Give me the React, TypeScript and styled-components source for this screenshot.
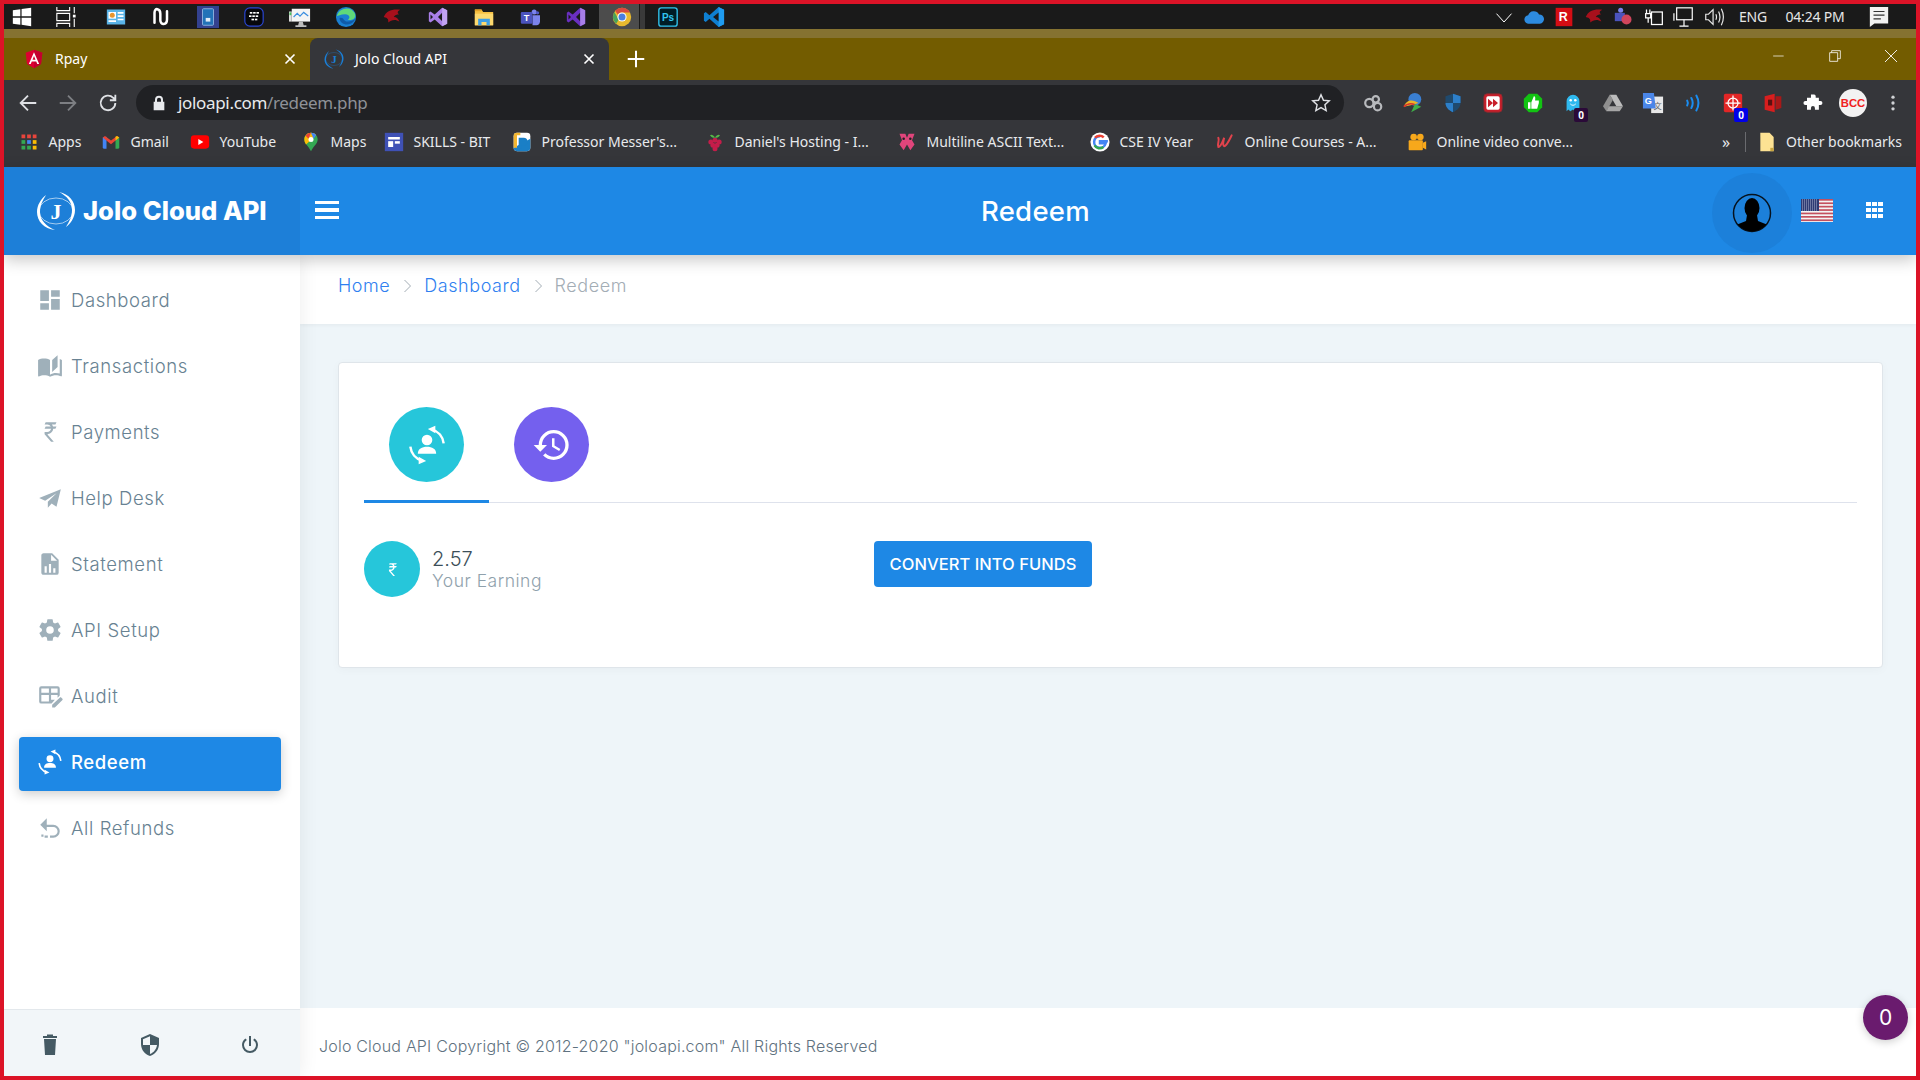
import React from "react";
import styled, { createGlobalStyle } from "styled-components";

const Global = createGlobalStyle`
  html, body { margin: 0; padding: 0; width: 1920px; height: 1080px; overflow: hidden; background: #fff; }
  * { box-sizing: border-box; }
`;

const UI = `"Noto Sans", "Open Sans", sans-serif`;
const PAGE = `Inter, "Open Sans", sans-serif`;

const Frame = styled.div`
  position: relative; width: 1920px; height: 1080px; border: 4px solid #dc1327;
  display: flex; flex-direction: column; overflow: hidden; background: #eef5f9;
`;

/* ---------- Windows taskbar ---------- */
const Taskbar = styled.div`
  height: 25px; background: #1a1a1a; display: flex; align-items: center; color: #fff; flex: none;
`;
const TaskSlot = styled.div<{ $w?: number; $active?: boolean }>`
  width: ${p => p.$w ?? 46}px; height: 25px; flex: none; display: flex; align-items: center; justify-content: center;
  background: ${p => (p.$active ? "linear-gradient(90deg,#4c4c4c 0 40px,#1a1a1a 40px 41px,#3a3a3a 41px)" : "transparent")};
`;
const Tray = styled.div`
  margin-left: auto; display: flex; align-items: center; height: 25px;
`;
const TrayText = styled.span<{ $w: number }>`
  width: ${p => p.$w}px; text-align: center; font: 400 14px ${UI}; color: #e6e6e6; letter-spacing: -0.2px; flex: none;
`;
const OliveBand = styled.div`height: 9px; background: #857231; flex: none;`;

/* ---------- Chrome tab strip ---------- */
const TabStrip = styled.div`
  height: 42px; background: #735c00; display: flex; align-items: stretch; flex: none; color: #fff;
`;
const BrowserTab = styled.div<{ $active?: boolean }>`
  width: ${p => (p.$active ? 299 : 306)}px; display: flex; align-items: center; flex: none;
  padding-left: ${p => (p.$active ? 14 : 20)}px; padding-right: 11px; padding-bottom: 1px;
  background: ${p => (p.$active ? "#35363a" : "transparent")};
  border-radius: 8px 8px 0 0; font: 400 14px ${UI}; gap: 11px;
`;
const TabTitle = styled.span`flex: 1; white-space: nowrap;`;
const NewTab = styled.div`width: 54px; display: flex; align-items: center; justify-content: center; flex: none;`;
const WindowButtons = styled.div`margin-left: auto; display: flex; align-items: flex-start; padding-top: 2px; margin-right: -3px;`;
const WinBtn = styled.div`width: 56px; height: 32px; display: flex; align-items: center; justify-content: center;`;

/* ---------- Toolbar ---------- */
const Toolbar = styled.div`
  height: 45px; background: #35363a; display: flex; align-items: center; padding-left: 4px; flex: none; color: #fff;
`;
const NavBtn = styled.div`width: 40px; height: 35px; display: flex; align-items: center; justify-content: center; flex: none;`;
const Omnibox = styled.div`
  margin-left: 8px; width: 1208px; height: 35px; background: #202124; border-radius: 18px; display: flex; align-items: center;
  padding: 0 12px 0 15px; flex: none;
`;
const Url = styled.div`flex: 1; margin-left: 11px; font: 400 17px ${UI}; color: #e8eaed; letter-spacing: -0.33px;`;
const UrlDim = styled.span`color: #8e9197;`;
const Extensions = styled.div`display: flex; margin-left: 9px; align-items: center;`;
const Ext = styled.div`
  position: relative; width: 40px; height: 30px; display: flex; align-items: center; justify-content: center; flex: none;
`;
const ExtCount = styled.span<{ $bg: string }>`
  position: absolute; right: 5px; bottom: -4px; width: 14px; height: 14px; background: ${p => p.$bg}; color: #fff;
  font: 700 10px ${UI}; display: flex; align-items: center; justify-content: center; border-radius: 2px;
`;

/* ---------- Bookmarks ---------- */
const BookmarkBar = styled.div`
  height: 42px; background: #35363a; display: flex; align-items: center; padding: 0 0 9px 15px; flex: none; color: #fff;
`;
const Bookmark = styled.div<{ $w: number }>`
  width: ${p => p.$w}px; display: flex; align-items: center; gap: 9.5px; flex: none;
  font: 400 14px ${UI}; white-space: nowrap; letter-spacing: 0; color: #e8eaed;
`;
const BookmarkEnd = styled.div`
  margin-left: auto; display: flex; align-items: center; gap: 9px; padding-right: 14px; font: 400 14px ${UI}; letter-spacing: 0; color: #e8eaed;
`;
const Chevrons = styled.span`font-size: 16px; margin-right: 6px;`;
const Divider = styled.span`width: 1px; height: 20px; background: #6a6b6f; margin-right: 2px;`;
const IconBox = styled.span`width: 20px; height: 20px; display: flex; align-items: center; justify-content: center; flex: none;`;

/* ---------- App header ---------- */
const Header = styled.header`
  height: 88px; background: #1e88e5; display: flex; align-items: center; flex: none; position: relative; z-index: 3;
  box-shadow: 0 5px 15px rgba(0,0,0,.22); color: #fff;
`;
const Brand = styled.div`
  width: 296px; height: 88px; background: #1d7fd8; display: flex; align-items: center; padding: 0 0 1px 32px; gap: 7px; flex: none;
`;
const BrandName = styled.span`font: 800 25.6px ${PAGE}; letter-spacing: 0; white-space: nowrap;`;
const Burger = styled.div`margin: 0 0 2px 15px; width: 24px; display: flex; flex-direction: column; gap: 4.5px;`;
const BurgerBar = styled.span`height: 3.2px; background: #fff; display: block;`;
const HeaderTitle = styled.div`
  flex: 1; text-align: center; font: 500 27.5px ${PAGE}; letter-spacing: 0.3px; padding-left: 20px;
`;
const UserHalo = styled.div`
  width: 80px; height: 80px; border-radius: 50%; background: #1c80da; display: flex; align-items: center; justify-content: center; flex: none; margin-top: 4px;
`;
const Flag = styled.div`margin: 0 0 2px 9px; display: flex; flex: none;`;
const AppsGrid = styled.div`
  margin: 0 33px 2px 33px; width: 17px; height: 16px; display: grid; grid-template-columns: repeat(3, 5px);
  grid-auto-rows: 4px; gap: 2px 1px; flex: none;
`;
const AppsDot = styled.span`background: #fff;`;

/* ---------- Layout ---------- */
const Body = styled.div`flex: 1; display: flex; min-height: 0;`;
const Sidebar = styled.aside`
  width: 296px; flex: none; background: #fff; display: flex; flex-direction: column; position: relative; z-index: 2;
  box-shadow: 1px 0 18px rgba(0,0,0,.07);
`;
const Nav = styled.nav`flex: 1; padding-top: 20px;`;
const NavItem = styled.div<{ $active?: boolean }>`
  height: 54px; margin: 0 19px 12px 15px; padding: 0 0 5px 18px; display: flex; align-items: center; gap: 8px; border-radius: 4px;
  font: ${p => (p.$active ? 500 : 300)} 18.5px ${PAGE}; letter-spacing: 0.6px;
  color: ${p => (p.$active ? "#fff" : "#688292")};
  background: ${p => (p.$active ? "#1e88e5" : "transparent")};
  box-shadow: ${p => (p.$active ? "0 3px 12px rgba(0,0,0,.2)" : "none")};
`;
const NavIcon = styled.svg<{ $active?: boolean }>`
  width: 26px; height: 26px; flex: none; fill: ${p => (p.$active ? "#fff" : "#9fb0ba")};
`;
const SideFooter = styled.div`
  height: 67px; background: #f2f6f9; border-top: 1px solid #e3e8ec; display: grid; grid-template-columns: repeat(3, 100px);
  align-items: center; justify-items: center; padding: 4px 0 0 0; flex: none;
`;
const FootIcon = styled.svg`width: 24px; height: 24px; fill: #455a64; margin-left: -8px;`;

const Main = styled.main`flex: 1; display: flex; flex-direction: column; min-width: 0;`;
const Breadcrumb = styled.div`
  height: 69px; background: #fff; display: flex; align-items: center; padding: 0 0 8px 38px; flex: none; gap: 12px;
  font: 300 18px ${PAGE}; letter-spacing: 0.55px; box-shadow: 0 1px 4px rgba(0,0,0,.05);
`;
const Crumb = styled.span<{ $current?: boolean }>`color: ${p => (p.$current ? "#a3adb5" : "#2f7ff0")};`;
const CrumbSep = styled.svg`width: 9px; height: 14px; fill: none; stroke: #a3adb5; stroke-width: 1; margin: 0 0 0 1px;`;
const Content = styled.div`flex: 1; padding: 38px 33px 0 38px;`;
const Card = styled.section`
  height: 306px; background: #fff; border: 1px solid #dfe5ea; border-radius: 4px; padding: 44px 25px 0 25px;
  box-shadow: 0 2px 10px rgba(0,0,0,.03);
`;
const Tabs = styled.div`display: flex; border-bottom: 1px solid #dee2ec; height: 96px;`;
const Tab = styled.div<{ $active?: boolean }>`
  width: 125px; height: 96px; display: flex; justify-content: center;
  border-bottom: 3px solid ${p => (p.$active ? "#1e88e5" : "transparent")};
`;
const TabCircle = styled.div<{ $bg: string }>`
  width: 75px; height: 75px; border-radius: 50%; background: ${p => p.$bg}; display: flex; align-items: center; justify-content: center;
`;
const TabGlyph = styled.svg`width: 40px; height: 40px; fill: #fff;`;
const Stats = styled.div`display: flex; margin-top: 38px;`;
const Stat = styled.div`width: 510px; display: flex; align-items: flex-start; gap: 12px; flex: none;`;
const StatCircle = styled.div`
  width: 56px; height: 56px; border-radius: 50%; background: #26c6da; display: flex; align-items: center; justify-content: center; flex: none;
`;
const StatGlyph = styled.svg`width: 17px; height: 17px; fill: #fff;`;
const StatText = styled.div`display: flex; flex-direction: column; padding-top: 6px;`;
const StatValue = styled.span`font: 300 20px/24px ${PAGE}; color: #3c4f59;`;
const StatLabel = styled.span`font: 300 17.5px/19px ${PAGE}; color: #8fa1ac; letter-spacing: 0.5px;`;
const ConvertButton = styled.button`
  width: 218px; height: 46px; border: 0; border-radius: 4px; background: #1e88e5; color: #fff; padding: 0; cursor: pointer;
  font: 500 16.5px ${PAGE}; letter-spacing: 0.05px;
`;
const Footer = styled.footer`
  height: 68px; background: #fff; display: flex; align-items: center; padding: 7px 0 0 19px; flex: none;
  font: 300 16px ${PAGE}; color: #5f7280; letter-spacing: 0.2px;
`;
const Counter = styled.div`
  position: absolute; right: 8px; bottom: 36px; width: 45px; height: 45px; border-radius: 50%; background: #6a1b6e; z-index: 5;
  color: #fff; font: 400 21px ${PAGE}; display: flex; align-items: center; justify-content: center;
  box-shadow: 0 2px 8px rgba(0,0,0,.2);
`;

/* ---------- drawings ---------- */
const S = ({ s = 20, v = 24, children }: { s?: number; v?: number; children: React.ReactNode }) => (
  <svg width={s} height={s} viewBox={`0 0 ${v} ${v}`}>{children}</svg>
);

const taskIcons: React.ReactNode[] = [
  <S s={20}><path fill="#fff" d="M1 4l9-1.3V11H1zM11.5 2.5L23 1v10H11.5zM1 13h9v8.3L1 20zM11.5 13H23v10l-11.5-1.6z"/></S>,
  <S s={22}><g fill="none" stroke="#fff" strokeWidth="1.2"><path d="M2 1v4h14V1M2 8h14v8H2zM2 23v-4h14v4M21 1v7M21 14v9"/></g><rect x="19.5" y="9.5" width="3" height="3" fill="#fff"/></S>,
  <S s={20}><rect x="1" y="3" width="22" height="18" fill="#5ab4e8"/><rect x="3" y="6" width="9" height="8" fill="#fff"/><circle cx="7.5" cy="10" r="3" fill="#e8962e"/><path d="M14 6h7v2h-7zM14 10h7v2h-7zM14 14h7v2h-7zM3 16h9v2H3z" fill="#fff"/></S>,
  <S s={20}><path d="M3 19V7c0-7 7-5 7 1v8c0 6 8 6 8-1V5" fill="none" stroke="#fff" strokeWidth="3" strokeLinecap="round"/></S>,
  <S s={22}><rect width="24" height="24" fill="#33418f"/><rect x="6" y="3" width="12" height="18" rx="1" fill="#2272b8" stroke="#8fb4e0"/><rect x="9.500" y="13" width="5" height="4" fill="#dfe9f5"/></S>,
  <S s={20}><rect x="1" y="1" width="22" height="22" rx="6" fill="#07080c" stroke="#2a47d6" strokeWidth="1.4"/><g fill="#fff"><rect x="7" y="6" width="3" height="2"/><rect x="11" y="6" width="3" height="2"/><rect x="15" y="6" width="3" height="2"/><rect x="6" y="10" width="3" height="2"/><rect x="10" y="10" width="3" height="2"/><rect x="14" y="10" width="3" height="2"/><rect x="9" y="14" width="3" height="2"/><rect x="13" y="14" width="3" height="2"/></g></S>,
  <S s={22}><rect x="3" y="3" width="20" height="14" fill="#f4f4f4"/><path d="M5 12l4-4 3 3 4-4 5 4" fill="none" stroke="#3a8ee0" strokeWidth="1.3"/><rect y="6" width="3" height="11" fill="#dedede"/><rect y=" 7" x="0.5" width="2" height="3" fill="#46c25a"/><path d="M11 17h4l1 4h3v2H7v-2h3z" fill="#bdbdbd"/></S>,
  <S s={22}><circle cx="12" cy="12" r="11" fill="#1a7fd2"/><path d="M2 11C4 2 18-1 22 9c1 5-4 7-8 6 3-2 2-6-3-6-5 0-8 2-9 2z" fill="#5fd97a"/><path d="M5 13c0 5 5 8 10 7 4-1 6-3 7-6-3 3-9 4-11 2-2-1-2-4-6-3z" fill="#0f5aa8"/></S>,
  <S s={22}><path d="M3 12c3-7 9-9 18-8-4 2-3 4-1 5-3 0-5 1-6 3 3 0 5 2 6 5-4-3-9-2-12 1 0-3 0-5-5-6z" fill="#a8101c"/></S>,
  <S s={20}><path d="M17 1l6 3v16l-6 3-9-8-5 3.5L1 17V7l2-1.5L8 9zM17 7l-5 5 5 5z" fill="#a97fe8" fillRule="evenodd"/><path d="M17 1l6 3v16l-6 3z" fill="#c2a3f3"/><path d="M3 9v6l3-3z" fill="#1a1a1a"/></S>,
  <S s={20}><path d="M1 3h8l2 3h12v16H1z" fill="#f6c143"/><rect x="1" y="8" width="22" height="14" fill="#fcd96f"/><path d="M5 22v-8h14v8h-4v-4H9v4z" fill="#3d9ee6"/><rect x="1" y="3" width="8" height="2" fill="#e2a126"/></S>,
  <S s={20}><circle cx="17" cy="6" r="3" fill="#7b83eb"/><circle cx="21" cy="7" r="2" fill="#5059c9"/><path d="M15 10h9v7c0 3-2 5-4 5h-5z" fill="#7b83eb"/><rect x="1" y="6" width="14" height="14" rx="1.5" fill="#4b53bc"/><text x="8" y="17" textAnchor="middle" fontSize="11" fontWeight="700" fill="#fff" fontFamily="Liberation Sans">T</text></S>,
  <S s={20}><path d="M17 1l6 3v16l-6 3-9-8-5 3.5L1 17V7l2-1.5L8 9zM17 7l-5 5 5 5z" fill="#6a2fc0" fillRule="evenodd"/><path d="M17 1l6 3v16l-6 3z" fill="#a77ee8"/><path d="M3 9v6l3-3z" fill="#1a1a1a"/></S>,
  <S s={20}><circle cx="12" cy="12" r="11" fill="#e8b92f"/><path d="M12 1a11 11 0 0 1 9.6 5.5H12A5.5 5.5 0 0 0 7 9L3.7 4.5A11 11 0 0 1 12 1z" fill="#d84a3f"/><path d="M2.8 6 8 15l-3 5A11 11 0 0 1 2.8 6z" fill="#4aa35a"/><circle cx="12" cy="12" r="5.5" fill="#fff"/><circle cx="12" cy="12" r="4.2" fill="#4a7fe0"/></S>,
  <S s={20}><rect x="1" y="1" width="22" height="22" rx="3" fill="#001d26" stroke="#31c5f0" strokeWidth="1.6"/><text x="12" y="17" textAnchor="middle" fontSize="12" fontWeight="700" fill="#31c5f0" fontFamily="Liberation Sans">Ps</text></S>,
  <S s={22}><path d="M17 1l6 3v16l-6 3-10-9-4 3.5L1 16V8l2-1.5L7 10z" fill="#0e7fd1"/><path d="M17 1l6 3v16l-6 3z" fill="#1f9cf0"/><path d="M17 7l-6 5 6 5z" fill="#1a1a1a"/></S>,
];

const extIcons: React.ReactNode[] = [
  <S s={22}><g fill="none" stroke="#b8babd" strokeWidth="2.4"><circle cx="8" cy="12" r="4.5"/><circle cx="15" cy="8" r="3.5"/><circle cx="17" cy="16" r="4"/></g></S>,
  <S s={22}><circle cx="14" cy="8" r="7" fill="#3a7fd2"/><path d="M2 16C5 8 12 8 18 12l-6 2z" fill="#e8b52a"/><path d="M2 16c3-3 8-4 12-2" stroke="#d8342c" strokeWidth="2" fill="none"/><path d="M10 22l11-6-7-3z" fill="#3fae49"/></S>,
  <S s={20}><path d="M12 1l9 3v8c0 5-4 9-9 11-5-2-9-6-9-11V4z" fill="#1f4a6e"/><path d="M12 1v11h9V4zM3 12h9v11c-5-2-9-6-9-11z" fill="#2d7fc9"/></S>,
  <S s={20}><rect x="1" y="1" width="22" height="22" rx="4" fill="#c81e2a" stroke="#8c2c30"/><rect x="4" y="4" width="16" height="16" rx="2" fill="#fff"/><path d="M6 7l6 5-6 5zM12 7l6 5-6 5z" fill="#c81e2a"/></S>,
  <S s={20}><path d="M7 1h10l6 6v10l-6 6H7l-6-6V7z" fill="#12c412"/><path d="M6 11h3v8H6zM10 11l3-7c2 0 2 2 1.5 5H19v3l-2 7h-7z" fill="#fff"/></S>,
  <S s={22}><path d="M5 21V10a7 7 0 0 1 14 0v11l-3-2-2 2-2-2-3 2-2-2z" fill="#2fb9ef"/><circle cx="9.5" cy="9" r="1.4" fill="#fff"/><circle cx="14.5" cy="9" r="1.4" fill="#fff"/><path d="M9 13c2 2 4 2 6 0" stroke="#fff" fill="none"/></S>,
  <S s={20}><path d="M8 2h8l8 14h-8z" fill="#bcbcbc"/><path d="M8 2L0 16l4 6 8-14z" fill="#8f8f8f"/><path d="M7 16h17l-4 6H4z" fill="#a6a6a6"/></S>,
  <S s={22}><rect x="10" y="5" width="13" height="18" fill="#e8e8e8"/><text x="17" y="18" textAnchor="middle" fontSize="9" fill="#666" fontFamily="Noto Sans CJK SC">文</text><path d="M1 1h12l2 17H1z" fill="#4a86e8"/><text x="7" y="13" textAnchor="middle" fontSize="10" fontWeight="700" fill="#fff" fontFamily="Liberation Sans">G</text></S>,
  <S s={20}><g fill="none" stroke="#1a8df0" strokeWidth="2.4" strokeLinecap="round"><path d="M5 9c1.2 2 1.2 4 0 6"/><path d="M10 6c2.2 4 2.2 8 0 12"/><path d="M16 3c3.4 6 3.4 12 0 18"/></g></S>,
  <S s={20}><rect x="1" y="1" width="22" height="22" rx="2" fill="#e22626"/><g fill="none" stroke="#fff" strokeWidth="1.5"><circle cx="12" cy="12" r="6"/><path d="M12 3v18M3 12h18"/></g></S>,
  <S s={20}><path d="M2 4l12-3v22L2 20z" fill="#d81e1e"/><path d="M15 4h7v14l-7 2z" fill="#a81818"/><rect x="6" y="8" width="5" height="7" fill="#5a1010"/></S>,
  <S s={20}><path d="M9 2h4a2 2 0 0 1 2 2v2h4v4h2a2.5 2.5 0 0 1 0 5h-2v6h-5v-2a2.5 2.5 0 0 0-5 0v2H4v-6H2a2.5 2.5 0 0 1 0-5h2V6h5z" fill="#fff" transform="translate(1 0) scale(.95)"/></S>,
  <S s={28} v={26}><circle cx="13" cy="13" r="13" fill="#f2f2f2"/><text x="13" y="17" textAnchor="middle" fontSize="10.5" fontWeight="700" fill="#f02020" fontFamily="Liberation Sans">BCC</text></S>,
  <S s={20}><g fill="#d0d2d5"><circle cx="12" cy="5" r="2"/><circle cx="12" cy="12" r="2"/><circle cx="12" cy="19" r="2"/></g></S>,
];
const extCounts: Record<number, string> = { 5: "#2a0a38", 9: "#0000e8" };

const bookmarks: { label: string; w: number; icon: React.ReactNode }[] = [
  { label: "Apps", w: 82, icon: <S s={18}><g>{[0,1,2].flatMap(r => [0,1,2].map(c => <rect key={`${r}${c}`} x={2+c*7.5} y={2+r*7.5} width="5" height="5" fill={["#e8453c","#e8453c","#e8453c","#34a853","#4285f4","#fbbc05","#34a853","#34a853","#fbbc05"][r*3+c]} />))}</g></S> },
  { label: "Gmail", w: 89, icon: <S s={18}><path d="M1 6l5-1v16H3a2 2 0 0 1-2-2z" fill="#4285f4"/><path d="M18 5l5 1v13a2 2 0 0 1-2 2h-3z" fill="#34a853"/><path d="M1 6l3-2 8 6 8-6 3 2-11 9z" fill="#ea4335"/><path d="M18 5l2-1 3 2-5 4z" fill="#fbbc05"/></S> },
  { label: "YouTube", w: 111, icon: <S s={20}><rect x="1" y="4" width="22" height="16" rx="4" fill="#f00"/><path d="M10 8.5l6 3.5-6 3.5z" fill="#fff"/></S> },
  { label: "Maps", w: 83, icon: <S s={20}><path d="M12 1c4.5 0 8 3.5 8 8 0 5-5 8-8 14-3-6-8-9-8-14 0-4.500 3.500-8 8-8z" fill="#34a853"/><path d="M12 1c2.500 0 4.700 1 6.200 2.800L6 15c-1-1.800-2-3.600-2-6 0-4.500 3.500-8 8-8z" fill="#fbbc05"/><path d="M12 1C9.500 1 7 2.200 5.500 4.500L9 8z" fill="#ea4335"/><path d="M12 1c2.500 0 4.700 1 6.200 2.800L15 8z" fill="#4285f4"/><circle cx="12" cy="9" r="3" fill="#fff"/></S> },
  { label: "SKILLS - BIT", w: 128, icon: <S s={20}><rect x="1" y="1" width="22" height="22" fill="#3f51b5"/><rect x="5" y="6" width="14" height="3" fill="#fff"/><rect x="5" y="11" width="6" height="7" fill="#fff"/><rect x="13" y="11" width="6" height="3" fill="#fff"/></S> },
  { label: "Professor Messer's...", w: 193, icon: <S s={20}><rect x="2" y="1" width="20" height="22" rx="4" fill="#fff"/><path d="M2 19L22 8v11a4 4 0 0 1-4 4H6a4 4 0 0 1-4-4z" fill="#1a7fc6"/><path d="M2 5a4 4 0 0 1 4-4h4v3H6v15H2z" fill="#f2b632"/><path d="M8 7h6a4.500 4.500 0 0 1 0 9h-3v4H8z" fill="#1a7fc6"/></S> },
  { label: "Daniel's Hosting - I...", w: 192, icon: <S s={20}><g fill="#c51d4a"><circle cx="12" cy="10" r="3"/><circle cx="7" cy="12" r="3"/><circle cx="17" cy="12" r="3"/><circle cx="9.500" cy="16" r="3"/><circle cx="14.500" cy="16" r="3"/><circle cx="12" cy="20" r="3"/></g><path d="M12 7C10 3 7 3 6 4c2 3 4 3 6 3 2 0 4 0 6-3-1-1-4-1-6 3z" fill="#55b948"/></S> },
  { label: "Multiline ASCII Text...", w: 193, icon: <S s={20}><path d="M3 2h7l2 5 2-5h7l-3 8 3 5-5 7-4-7-4 7-5-7 3-5z" fill="#e0457b"/><circle cx="8" cy="8" r="1.500" fill="#222"/><circle cx="16" cy="8" r="1.500" fill="#222"/></S> },
  { label: "CSE IV Year", w: 125, icon: <S s={20}><circle cx="12" cy="12" r="11.500" fill="#fff"/><path d="M12 5a7 7 0 1 0 6.800 8.500H12v-2.500h9.500" fill="none" stroke="#4285f4" strokeWidth="3"/><path d="M6 7a7 7 0 0 1 10.500-.5" fill="none" stroke="#ea4335" strokeWidth="3"/><path d="M5.500 16a7 7 0 0 0 10.500 2" fill="none" stroke="#34a853" strokeWidth="3"/></S> },
  { label: "Online Courses - A...", w: 192, icon: <S s={20}><path d="M4 7c2 3-2 8 0 11 3 0 5-6 7-11-1 4-2 9 0 10 3 0 6-7 9-13" fill="none" stroke="#e0434c" strokeWidth="2.400" strokeLinecap="round"/></S> },
  { label: "Online video conve...", w: 0, icon: <S s={20}><circle cx="8" cy="6" r="4" fill="#f7a81b"/><circle cx="16" cy="6" r="4" fill="#f7a81b"/><rect x="2" y="10" width="17" height="12" rx="1" fill="#f7a81b"/><path d="M19 13l4-2v10l-4-2z" fill="#f7a81b"/></S> },
];

const NavSvg = ({ d, active, children }: { d?: string; active?: boolean; children?: React.ReactNode }) => (
  <NavIcon viewBox="0 0 24 24" $active={active}>{d && <path d={d} />}{children}</NavIcon>
);

const ConvertGlyph = ({ stroke = "#fff" }: { stroke?: string }) => (
  <>
    <circle cx="12" cy="9" r="3.2" fill={stroke} />
    <path d="M6.500 17.200c0-3 2.500-4.200 5.500-4.200s5.500 1.200 5.500 4.200z" fill={stroke} />
    <path d="M15 2.600A10 10 0 0 1 22 11M9 21.400A10 10 0 0 1 2 13" fill="none" stroke={stroke} strokeWidth="1.500" />
    <path d="M12.500 2.400l4.500-2v4.500zM11.500 21.600l-4.500 2v-4.500z" fill={stroke} />
  </>
);

const paths = {
  dashboard: "M13,3V9H21V3M13,21H21V11H13M3,21H11V15H3M3,13H11V3H3V13Z",
  book: "M19 2L14 6.5V17.5L19 13V2M6.5 5C4.55 5 2.45 5.4 1 6.5V21.16C1 21.41 1.25 21.66 1.5 21.66C1.6 21.66 1.65 21.59 1.75 21.59C3.1 20.94 5.05 20.5 6.5 20.5C8.45 20.5 10.55 20.9 12 22C13.35 21.15 15.8 20.5 17.5 20.5C19.15 20.5 20.85 20.81 22.25 21.56C22.35 21.61 22.4 21.59 22.5 21.59C22.75 21.59 23 21.34 23 21.09V6.5C22.4 6.05 21.75 5.75 21 5.5V19C19.9 18.65 18.7 18.5 17.5 18.5C15.8 18.5 13.35 19.15 12 20V6.5C10.55 5.4 8.45 5 6.5 5Z",
  inr: "M8,3H18L17,5H13.74C14.22,5.58 14.58,6.26 14.79,7H18L17,9H15C14.75,11.57 12.74,13.63 10.2,13.96V14H9.5L15.5,21H13L7,14V12H9.5V12C11.26,12 12.72,10.7 12.96,9H7L8,7H12.66C12.1,5.82 10.9,5 9.5,5H7L8,3Z",
  send: "M22 4L2 12l5.500 2.500L18 7.500 10 15.500V21l3.500-4 4.500 3z",
  file: "M13,9H18.5L13,3.5V9M6,2H14L20,8V20A2,2 0 0,1 18,22H6C4.89,22 4,21.1 4,20V4C4,2.89 4.89,2 6,2M7,20H9V14H7V20M11,20H13V12H11V20M15,20H17V16H15V20Z",
  gear: "M12,15.5A3.5,3.5 0 0,1 8.5,12A3.5,3.5 0 0,1 12,8.5A3.5,3.5 0 0,1 15.5,12A3.5,3.5 0 0,1 12,15.5M19.43,12.97C19.47,12.65 19.5,12.33 19.5,12C19.5,11.67 19.47,11.34 19.43,11L21.54,9.37C21.73,9.22 21.78,8.95 21.66,8.73L19.66,5.27C19.54,5.05 19.27,4.96 19.05,5.05L16.56,6.05C16.04,5.66 15.5,5.32 14.87,5.07L14.5,2.42C14.46,2.18 14.25,2 14,2H10C9.75,2 9.54,2.18 9.5,2.42L9.13,5.07C8.5,5.32 7.96,5.66 7.44,6.05L4.95,5.05C4.73,4.96 4.46,5.05 4.34,5.27L2.34,8.73C2.21,8.95 2.27,9.22 2.46,9.37L4.57,11C4.53,11.34 4.5,11.67 4.5,12C4.5,12.33 4.53,12.65 4.57,12.97L2.46,14.63C2.27,14.78 2.21,15.05 2.34,15.27L4.34,18.73C4.46,18.95 4.73,19.03 4.95,18.95L7.44,17.94C7.96,18.34 8.5,18.68 9.13,18.93L9.5,21.58C9.54,21.82 9.75,22 10,22H14C14.25,22 14.46,21.82 14.5,21.58L14.87,18.93C15.5,18.67 16.04,18.34 16.56,17.94L19.05,18.95C19.27,19.03 19.54,18.95 19.66,18.73L21.66,15.27C21.78,15.05 21.73,14.78 21.54,14.63L19.43,12.97Z",
  table: "M4 3h15a2 2 0 0 1 2 2v6.500l-2 2V11h-6v4.500h3.500l-3 3.500H4a2 2 0 0 1-2-2V5a2 2 0 0 1 2-2zM4 5v4h7V5zM13 5v4h6V5zM4 11v6h7v-6zM22.500 13.500l1 1c.3.3.3.8 0 1.100l-7 7H14v-2.500l7-6.600c.4-.4 1.100-.4 1.500 0z",
  refund: "M9 3L3 9l6 6v-4h6a4 4 0 0 1 0 8h-3v2h3a6 6 0 0 0 0-12H9zM7 19h3v2H7zM4 18h2v2H4z",
  history: "M13.5,8H12V13L16.28,15.54L17,14.33L13.5,12.25V8M13,3A9,9 0 0,0 4,12H1L4.96,16.03L9,12H6A7,7 0 0,1 13,5A7,7 0 0,1 20,12A7,7 0 0,1 13,19C11.07,19 9.32,18.21 8.06,16.94L6.64,18.36C8.27,20 10.5,21 13,21A9,9 0 0,0 22,12A9,9 0 0,0 13,3",
  trash: "M6 6h12l-1 16H7zM5 3h14v2H5zM9 1.500h6V3H9z",
  shield: "M12,12H19C18.47,16.11 15.72,19.78 12,20.92V12H5V6.3L12,3.19M12,1L3,5V11C3,16.55 6.84,21.73 12,23C17.16,21.73 21,16.55 21,11V5L12,1Z",
  power: "M16.56,5.44L15.11,6.89C16.84,7.94 18,9.83 18,12A6,6 0 0,1 12,18A6,6 0 0,1 6,12C6,9.83 7.16,7.94 8.88,6.88L7.44,5.44C5.36,6.88 4,9.28 4,12A8,8 0 0,0 12,20A8,8 0 0,0 20,12C20,9.28 18.64,6.88 16.56,5.44M13,3H11V13H13",
};

const navItems = [
  { label: "Dashboard", d: paths.dashboard },
  { label: "Transactions", d: paths.book },
  { label: "Payments", d: paths.inr },
  { label: "Help Desk", d: paths.send },
  { label: "Statement", d: paths.file },
  { label: "API Setup", d: paths.gear },
  { label: "Audit", d: paths.table },
  { label: "Redeem", active: true },
  { label: "All Refunds", d: paths.refund },
];

const Chevron = () => <CrumbSep viewBox="0 0 9 14"><path d="M1.500 1l6 6-6 6" /></CrumbSep>;

const UsFlag = () => (
  <svg width="32" height="23" viewBox="0 0 32 23">
    <rect width="32" height="23" fill="#f4f4f4" />
    {[0, 1, 2, 3, 4, 5, 6].map(i => <rect key={i} y={i * 3.4} width="32" height="1.7" fill="#c4505f" />)}
    <rect width="18" height="12" fill="#2e3a73" />
    {[1, 3, 5, 7, 9, 11].map(y => <path key={y} d={`M1 ${y}h16`} stroke="#cfd3e6" strokeWidth=".8" strokeDasharray="1 1" />)}
  </svg>
);

const JoloMark = ({ size, color }: { size: number; color: string }) => (
  <svg width={size} height={size} viewBox="0 0 40 40">
    <path d="M23 1c10 2 16 9 16 18 0 8-5 14-9 17 3-5 6-10 6-17 0-8-5-14-13-18z" fill={color} />
    <path d="M19 39C8 38 1 30 1 21 1 14 5 8 10 4 7 9 4 14 4 21c0 8 6 14 15 18z" fill={color} />
    <ellipse cx="20" cy="20" rx="17" ry="13" fill="none" stroke={color} strokeWidth="1" opacity=".6" />
    <text x="20" y="28" textAnchor="middle" fontSize="22" fontWeight="700" fill={color} fontFamily="Liberation Serif">J</text>
  </svg>
);

const WhiteStroke = ({ s, d, w = 2, c = "#fff" }: { s: number; d: string; w?: number; c?: string }) => (
  <svg width={s} height={s} viewBox="0 0 24 24" fill="none" stroke={c} strokeWidth={w}><path d={d} /></svg>
);

export default function App() {
  return (
    <Frame>
      <Global />
      <Taskbar>
        <TaskSlot $w={36}>{taskIcons[0]}</TaskSlot>
        <TaskSlot $w={4} />
        <TaskSlot $w={44}>{taskIcons[1]}</TaskSlot>
        <TaskSlot $w={5} />
        {taskIcons.slice(2).map((icon, i) => (
          <TaskSlot key={i} $active={i === 11}>{icon}</TaskSlot>
        ))}
        <Tray>
          <TaskSlot $w={30}><WhiteStroke s={20} d="M3 8l9 10 9-10" w={1.2} /></TaskSlot>
          <TaskSlot $w={30}><S s={20}><path d="M6 20a5 5 0 0 1-1-10 7 7 0 0 1 13-1 5.500 5.500 0 0 1 1 11z" fill="#2d8be0" /></S></TaskSlot>
          <TaskSlot $w={30}><S s={20}><rect x="2" y="1" width="20" height="22" fill="#d50d14" /><text x="11" y="17" textAnchor="middle" fontSize="15" fontWeight="700" fill="#fff" fontFamily="Liberation Sans">R</text></S></TaskSlot>
          <TaskSlot $w={30}>{taskIcons[8]}</TaskSlot>
          <TaskSlot $w={30}><S s={20}><circle cx="8" cy="4" r="3" fill="#7b83eb" /><rect x="1" y="7" width="12" height="10" fill="#4b53bc" /><circle cx="15" cy="15" r="6" fill="#d0455c" /></S></TaskSlot>
          <TaskSlot $w={30}><S s={20}><g fill="none" stroke="#fff" strokeWidth="1.500"><rect x="9" y="6" width="13" height="15" /><path d="M3 3v5M7 3v5M2 8h6v5H2zM5 13v6" /></g></S></TaskSlot>
          <TaskSlot $w={30}><S s={22}><g fill="none" stroke="#fff" strokeWidth="1.300"><rect x="4" y="2" width="17" height="13" /><path d="M12 15v7M7 22h10M1 8v8" /></g></S></TaskSlot>
          <TaskSlot $w={30}><S s={22}><g fill="none" stroke="#e8e8e8" strokeWidth="1.300"><path d="M3 9h3l5-5v16l-5-5H3zM14 9c1 2 1 4 0 6M17 6c2 4 2 8 0 12M20 3c3 6 3 12 0 18" /></g></S></TaskSlot>
          <TrayText $w={48}>ENG</TrayText>
          <TrayText $w={76}>04:24 PM</TrayText>
          <TaskSlot $w={6} />
          <TaskSlot $w={40}><S s={22}><path d="M2 1h20v18H7l-5 4z" fill="#f2f2f2" /><path d="M6 6h12M6 10h12M6 14h8" stroke="#333" strokeWidth="1.300" /></S></TaskSlot>
          <TaskSlot $w={17} />
        </Tray>
      </Taskbar>
      <OliveBand />

      <TabStrip>
        <BrowserTab>
          <IconBox><S s={20}><path d="M12 1L2 4.500l1.600 13.400L12 23l8.400-5.100L22 4.500z" fill="#dd0031" /><path d="M12 1v22l8.400-5.100L22 4.500z" fill="#c3002f" /><path d="M12 4L5.800 18h2.300l1.200-3.100h5.400l1.200 3.100h2.300zm0 4.500l1.800 4.400h-3.600z" fill="#fff" /></S></IconBox>
          <TabTitle>Rpay</TabTitle>
          <WhiteStroke s={18} d="M6 6l12 12M18 6L6 18" w={2.2} />
        </BrowserTab>
        <BrowserTab $active>
          <IconBox><JoloMark size={20} color="#1a7fd8" /></IconBox>
          <TabTitle>Jolo Cloud API</TabTitle>
          <WhiteStroke s={18} d="M6 6l12 12M18 6L6 18" w={2.2} />
        </BrowserTab>
        <NewTab><WhiteStroke s={22} d="M12 3v18M3 12h18" w={2.2} /></NewTab>
        <WindowButtons>
          <WinBtn><WhiteStroke s={14} d="M2 12h18" w={1.2} /></WinBtn>
          <WinBtn><WhiteStroke s={16} d="M4 7h12v13H4zM7 7V4h13v12h-4" w={1.2} /></WinBtn>
          <WinBtn><WhiteStroke s={18} d="M4 4l16 16M20 4L4 20" w={1.2} /></WinBtn>
        </WindowButtons>
      </TabStrip>

      <Toolbar>
        <NavBtn><WhiteStroke s={22} d="M21 12H4M12 4l-8 8 8 8" c="#dfe1e5" /></NavBtn>
        <NavBtn><WhiteStroke s={22} d="M3 12h17M12 4l8 8-8 8" c="#7d7f83" /></NavBtn>
        <NavBtn><WhiteStroke s={22} d="M20 12a8 8 0 1 1-2.300-5.700L20 8.500M20 3v6h-6" c="#dfe1e5" /></NavBtn>
        <Omnibox>
          <S s={16}><path d="M6 10V7a6 6 0 0 1 12 0v3h2v13H4V10zm3 0h6V7a3 3 0 0 0-6 0z" fill="#e8eaed" fillRule="evenodd" /></S>
          <Url>joloapi.com<UrlDim>/redeem.php</UrlDim></Url>
          <WhiteStroke s={22} d="M12 3l2.700 6 6.300.7-4.700 4.300 1.300 6.300-5.600-3.200-5.600 3.200 1.300-6.300L3 9.700 9.300 9z" w={1.6} c="#dfe1e5" />
        </Omnibox>
        <Extensions>
          {extIcons.map((icon, i) => (
            <Ext key={i}>
              {icon}
              {extCounts[i] && <ExtCount $bg={extCounts[i]}>0</ExtCount>}
            </Ext>
          ))}
        </Extensions>
      </Toolbar>

      <BookmarkBar>
        {bookmarks.map(b => (
          <Bookmark key={b.label} $w={b.w || 300}>
            <IconBox>{b.icon}</IconBox>
            {b.label}
          </Bookmark>
        ))}
        <BookmarkEnd>
          <Chevrons>»</Chevrons>
          <Divider />
          <IconBox><S s={20}><path d="M4 1h11l5 5v17H4z" fill="#fde293" /><path d="M16 19h4v4h-4z" fill="#c9a640" /></S></IconBox>
          Other bookmarks
        </BookmarkEnd>
      </BookmarkBar>

      <Header>
        <Brand>
          <JoloMark size={40} color="#fff" />
          <BrandName>Jolo Cloud API</BrandName>
        </Brand>
        <Burger><BurgerBar /><BurgerBar /><BurgerBar /></Burger>
        <HeaderTitle>Redeem</HeaderTitle>
        <UserHalo>
          <svg width="40" height="40" viewBox="0 0 40 40">
            <defs><clipPath id="avatarClip"><circle cx="20" cy="20" r="18.500" /></clipPath></defs>
            <circle cx="20" cy="20" r="18.500" fill="none" stroke="#06121e" strokeWidth="1.500" />
            <g clipPath="url(#avatarClip)" fill="#000">
              <ellipse cx="20" cy="15" rx="7.500" ry="10" />
              <path d="M15 22h10l1 6 10 4 2 9H2l2-9 10-4z" />
            </g>
          </svg>
        </UserHalo>
        <Flag><UsFlag /></Flag>
        <AppsGrid>{Array.from({ length: 9 }, (_, i) => <AppsDot key={i} />)}</AppsGrid>
      </Header>

      <Body>
        <Sidebar>
          <Nav>
            {navItems.map(item => (
              <NavItem key={item.label} $active={item.active}>
                {item.active ? <NavSvg active><ConvertGlyph /></NavSvg> : <NavSvg d={item.d} />}
                {item.label}
              </NavItem>
            ))}
          </Nav>
          <SideFooter>
            <FootIcon viewBox="0 0 24 24"><path d={paths.trash} /></FootIcon>
            <FootIcon viewBox="0 0 24 24"><path d={paths.shield} /></FootIcon>
            <FootIcon viewBox="0 0 24 24"><path d={paths.power} /></FootIcon>
          </SideFooter>
        </Sidebar>
        <Main>
          <Breadcrumb>
            <Crumb>Home</Crumb><Chevron />
            <Crumb>Dashboard</Crumb><Chevron />
            <Crumb $current>Redeem</Crumb>
          </Breadcrumb>
          <Content>
            <Card>
              <Tabs>
                <Tab $active><TabCircle $bg="#26c6da"><TabGlyph viewBox="0 0 24 24"><ConvertGlyph /></TabGlyph></TabCircle></Tab>
                <Tab><TabCircle $bg="#7460ee"><TabGlyph viewBox="0 0 24 24"><path d={paths.history} /></TabGlyph></TabCircle></Tab>
              </Tabs>
              <Stats>
                <Stat>
                  <StatCircle><StatGlyph viewBox="0 0 24 24"><path d={paths.inr} /></StatGlyph></StatCircle>
                  <StatText>
                    <StatValue>2.57</StatValue>
                    <StatLabel>Your Earning</StatLabel>
                  </StatText>
                </Stat>
                <ConvertButton>CONVERT INTO FUNDS</ConvertButton>
              </Stats>
            </Card>
          </Content>
          <Footer>Jolo Cloud API Copyright © 2012-2020 "joloapi.com" All Rights Reserved</Footer>
        </Main>
      </Body>
      <Counter>0</Counter>
    </Frame>
  );
}
